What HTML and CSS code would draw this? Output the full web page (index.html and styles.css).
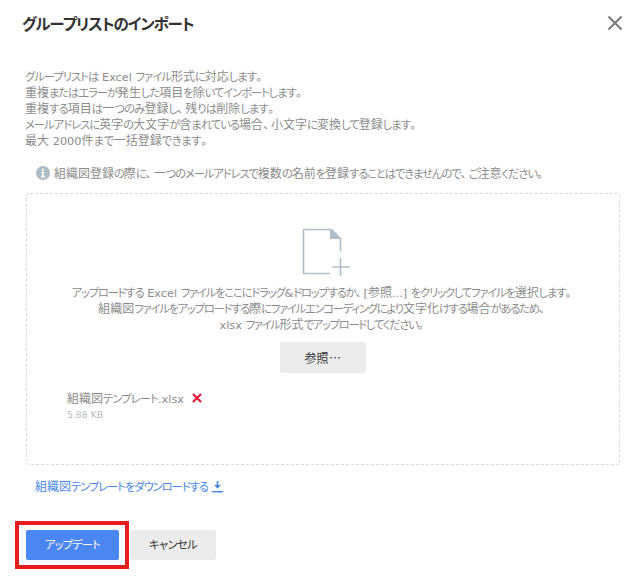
FILE: index.html
```
<!DOCTYPE html>
<html lang="ja">
<head>
<meta charset="utf-8">
<title>グループリストのインポート</title>
<link rel="stylesheet" href="styles.css">
</head>
<body>
<main class="dialog">
  <header class="head">
    <h1>グループリストのインポート</h1>
    <svg class="close" width="16" height="16" viewBox="0 0 16 16"><path d="M1.5 1.5l13 13M14.5 1.5l-13 13" fill="none" stroke="#777" stroke-width="1.9"/></svg>
  </header>
  <section class="desc">
    <p class="format"><span class="k">グループリストは</span> <span class="l">Excel</span> <span class="k">ファイル</span>形式<span class="k">に</span>対応<span class="k">します</span>。</p>
    <p class="errors">重複<span class="k">またはエラーが</span>発生<span class="k">した</span>項目<span class="k">を</span>除<span class="k">いてインポートします</span>。</p>
    <p class="duplicates">重複<span class="k">する</span>項目<span class="k">は</span>一<span class="k">つのみ</span>登録<span class="k">し</span><span class="c">、</span>残<span class="k">りは</span>削除<span class="k">します</span>。</p>
    <p class="letters"><span class="k">メールアドレスに</span>英字<span class="k">の</span>大文字<span class="k">が</span>含<span class="k">まれている</span>場合<span class="c">、</span>小文字<span class="k">に</span>変換<span class="k">して</span>登録<span class="k">します</span>。</p>
    <p class="limit">最大 <span class="l">2000</span>件<span class="k">まで</span>一括登録<span class="k">できます</span>。</p>
  </section>
  <div class="info">
    <svg width="14" height="14" viewBox="0 0 14 14"><circle cx="7" cy="7" r="7" fill="#adbcc5"/><path d="M6 2.700h2v2H6zM5 5.800h3v4.400h1v1.200H5v-1.200h1V7H5z" fill="#fff"/></svg>
    <p>組織図登録<span class="k">の</span>際<span class="k">に</span><span class="c">、</span>一<span class="k">つのメールアドレスで</span>複数<span class="k">の</span>名前<span class="k">を</span>登録<span class="k">することはできませんので</span><span class="c">、</span><span class="k">ご</span>注意<span class="k">ください</span>。</p>
  </div>
  <section class="drop">
    <svg class="file-icon" width="48" height="48" viewBox="0 0 48 48"><path d="M28 45.500H1.500V1.500h27l10 9.500v12.500" fill="none" stroke="#b0bec7" stroke-width="1.600"/><path d="M28 1h2l9 9v1H28z" fill="#b0bec7"/><path d="M30 39h17.500M38.500 30v18" stroke="#b0bec7" stroke-width="1.600"/></svg>
    <p class="drag"><span class="k">アップロードする</span> <span class="l">Excel</span> <span class="k">ファイルをここにドラッグ</span><span class="l">&amp;</span><span class="k">ドロップするか</span><span class="c">、</span><span class="l">[</span>参照<span class="l">...]</span> <span class="k">をクリックしてファイルを</span>選択<span class="k">します</span>。</p>
    <p class="encoding">組織図<span class="k">ファイルをアップロードする</span>際<span class="k">にファイルエンコーディングにより</span>文字化<span class="k">けする</span>場合<span class="k">があるため</span>、</p>
    <p class="xlsx"><span class="l">xlsx</span> <span class="k">ファイル</span>形式<span class="k">でアップロードしてください</span>。</p>
    <button class="btn browse">参照<span class="dots">⋯</span></button>
    <div class="file">
      <div class="name"><p>組織図<span class="k">テンプレート</span><span class="l">.xlsx</span></p>
        <svg width="10" height="10" viewBox="0 0 10 10"><path d="M1 1l8 8M9 1l-8 8" stroke="#e3173a" stroke-width="2.200"/></svg></div>
      <div class="size">5.88 KB</div>
    </div>
  </section>
  <a class="link"><p>組織図<span class="k">テンプレートをダウンロードする</span></p>
    <svg width="11" height="13" viewBox="0 0 11 13"><path d="M0 11.700h11" stroke="#4a87f2" stroke-width="1.500"/><path d="M5.500 1v5" stroke="#4a87f2" stroke-width="1.600"/><path d="M2.200 5h6.600L5.500 8.700z" fill="#4a87f2"/></svg></a>
  <footer class="actions">
    <div class="frame"><button class="btn primary"><span class="k">アップデート</span></button></div>
    <button class="btn cancel"><span class="k">キャンセル</span></button>
  </footer>
</main>
</body>
</html>
```
FILE: styles.css
```
* { box-sizing: border-box; }
body { margin: 0; background: #fff; color: #8c8c8c; font: 12px/16px "Noto Sans CJK JP", sans-serif; font-feature-settings: "palt"; }
p, h1 { margin: 0; white-space: nowrap; }
p { height: 16px; word-spacing: 1px; }
svg { display: block; flex: none; }
.dialog { width: 644px; height: 586px; overflow: hidden; }

/* Kana runs are set tighter than the kanji around them. */
.k { font-size: 11.3px; line-height: 1; }
.l { font-family: "DejaVu Sans", sans-serif; font-size: 11.3px; line-height: 1; }
.c { margin-right: 2px; }
.format .k { letter-spacing: -0.97px; }
.errors .k { letter-spacing: -1.05px; }
.duplicates .k { letter-spacing: -0.81px; }
.letters .k { letter-spacing: -0.97px; }
.limit .k { letter-spacing: -0.35px; }
.info .k { letter-spacing: -1.09px; }
.drag .k { letter-spacing: -1.18px; }
.encoding .k { letter-spacing: -1.23px; }
.xlsx .k { letter-spacing: -1.28px; }
.name .k { letter-spacing: -0.86px; }
.link .k { letter-spacing: -1.04px; }
.primary .k { letter-spacing: -0.87px; }
.cancel .k { letter-spacing: -0.64px; }

.head { display: flex; justify-content: space-between; align-items: center; height: 46px; padding: 0 21px 0 22px; }
h1 { font-size: 15.5px; line-height: 24px; font-weight: 700; letter-spacing: -1.08px; color: #333; }
.desc { padding: 22px 0 0 25px; }
.info { display: flex; align-items: center; gap: 4px; margin-top: 17px; padding-left: 36px; }
.drop { display: flex; flex-direction: column; align-items: center; margin: 12px 24px 0 26px; height: 272px; padding-top: 34px; border: 1px dashed #d9d9d9; border-radius: 4px; }
.drop > p { margin-right: 3px; }
.file-icon { margin: 0 0 8px 6px; }
.btn { display: flex; align-items: center; justify-content: center; height: 30px; padding: 0; border: 0; border-radius: 2px; background: #ececec; color: #333; font: inherit; font-feature-settings: inherit; white-space: nowrap; }
.browse { width: 86px; height: 31px; margin-top: 10px; }
.dots { width: 13px; }
.file { align-self: flex-start; margin: 17px 0 0 40px; }
.name { display: flex; align-items: center; gap: 8px; }
.size { margin-top: 1px; font: 9.3px/16px "DejaVu Sans", sans-serif; color: #bcbcbc; }
.link { display: flex; align-items: center; gap: 4px; margin: 13px 0 0 35px; color: #4a87f2; }
.actions { display: flex; align-items: center; gap: 1px; margin: 27px 0 0 15px; }
.frame { width: 114px; height: 48px; padding: 5px 7px; border: 4px solid #e81c1c; }
.primary { width: 93px; background: #4a87f2; color: #fff; }
.cancel { width: 86px; }
```
